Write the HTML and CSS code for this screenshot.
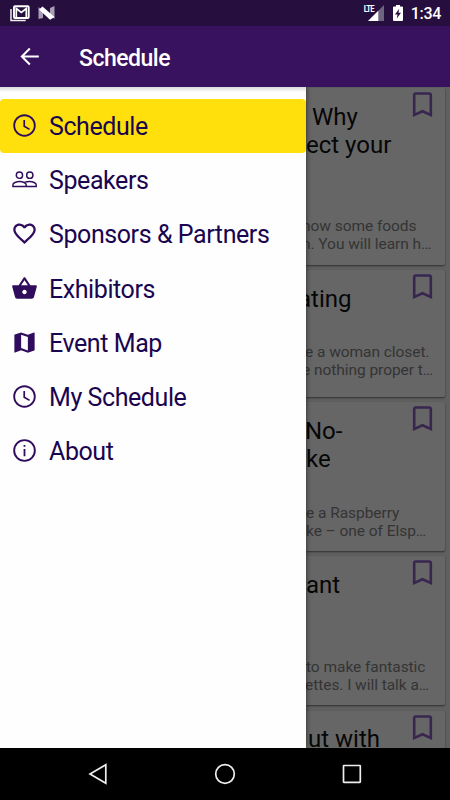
FILE: index.html
```html
<!DOCTYPE html>
<html lang="en">

<head>
    <meta charset="UTF-8">
    <meta name="viewport" content="width=device-width, initial-scale=1.0">
    <link rel="stylesheet" href="styles.css">
    <title>Schedule</title>
</head>

<body>

    <!-- shared icons -->
    <svg class="sprite">
        <symbol id="clock" viewBox="0 0 24 24">
            <path d="M11.990 2C6.470 2 2 6.480 2 12s4.470 10 9.990 10C17.520 22 22 17.520 22 12S17.520 2 11.990 2zM12 20.300c-4.580 0-8.300-3.720-8.300-8.300S7.420 3.700 12 3.700s8.300 3.720 8.300 8.300-3.720 8.300-8.300 8.300zM12.500 7H11v6l5.100 3.100.8-1.250-4.400-2.600z"/>
        </symbol>
        <symbol id="bookmark" viewBox="0 0 24 24">
            <path d="M17 3H7c-1.100 0-2 .9-2 2v16l7-3 7 3V5c0-1.100-.9-2-2-2zm.1 15.100L12 15.900l-5.100 2.200V4.900h10.200z"/>
        </symbol>
    </svg>

    <header class="status-bar">
        <svg class="gmail" viewBox="0 0 20 17">
            <path d="M1 4v11.500h14.700" fill="none" stroke="#eee" stroke-width="1.500"/>
            <rect x="4" y="1.200" width="14.700" height="11.800" rx="1" fill="none" stroke="#fff" stroke-width="1.900"/>
            <path d="M6.300 12V3.500l5 4 5-4V12" fill="none" stroke="#fff" stroke-width="1.700"/>
        </svg>
        <svg class="nougat" viewBox="0 0 17 14">
            <path d="M.5 1L5 5v7L.5 13zM16.500 0v13L12 9V2z" fill="#a79db5"/>
            <path d="M4.500.5L16.500 11l-4.500 2.700L1 3.500z" fill="#fff"/>
        </svg>
        <div class="status-right">
            <span class="lte">LTE</span>
            <svg class="signal" viewBox="0 0 16 16">
                <path d="M16 0v16H0z" fill="#6f6480"/>
                <path d="M10.300 5.700V16H0z" fill="#fff"/>
            </svg>
            <svg class="battery" viewBox="0 0 10 16">
                <path d="M3 0h4v1.500h2q1 0 1 1V15q0 1-1 1H1q-1 0-1-1V2.500q0-1 1-1h2z" fill="#fff"/>
                <path d="M6.200 3.800L2 9.500h2.500l-.7 4L8 7.700H5.500z" fill="#260e3f"/>
            </svg>
            <span class="time">1:34</span>
        </div>
    </header>

    <div class="toolbar">
        <svg class="back" viewBox="0 0 24 24">
            <path d="M20.300 12H5.200M12.300 4.900L5.200 12l7.100 7.100" fill="none" stroke="#fff" stroke-width="1.800"/>
        </svg>
        <h1>Schedule</h1>
    </div>

    <main class="content">

        <nav class="drawer">
            <a class="item active">
                <svg><use href="#clock"/></svg>
                <span>Schedule</span>
            </a>
            <a class="item">
                <svg viewBox="0 0 24 24">
                    <g fill="none" stroke="currentColor" stroke-width="1.300">
                        <circle cx="7.500" cy="8.200" r="2.800"/>
                        <circle cx="16.700" cy="8.200" r="2.800"/>
                        <path d="M1.700 18.300v-1.600c0-1.600 3-2.900 5.900-2.900s5.900 1.300 5.900 2.900v1.600zM12 14.600c1.200-.5 2.900-.8 4.500-.8 2.900 0 5.900 1.300 5.900 2.900v1.600H12"/>
                    </g>
                </svg>
                <span>Speakers</span>
            </a>
            <a class="item">
                <svg viewBox="0 0 24 24">
                    <path d="M16.500 3c-1.740 0-3.410.81-4.500 2.090C10.910 3.810 9.240 3 7.500 3 4.420 3 2 5.420 2 8.500c0 3.780 3.400 6.860 8.550 11.540L12 21.350l1.450-1.320C18.600 15.360 22 12.280 22 8.500 22 5.420 19.580 3 16.500 3zm-4.400 15.550l-.1.100-.1-.1C7.140 14.240 4 11.390 4 8.500 4 6.500 5.500 5 7.500 5c1.540 0 3.040.99 3.570 2.360h1.870C13.460 5.990 14.960 5 16.500 5c2 0 3.500 1.500 3.500 3.500 0 2.890-3.140 5.740-7.900 10.050z"/>
                </svg>
                <span>Sponsors &amp; Partners</span>
            </a>
            <a class="item">
                <svg viewBox="0 0 24 24">
                    <path d="M17.210 9l-4.380-6.560c-.19-.28-.51-.42-.83-.42-.32 0-.64.14-.83.430L6.790 9H2c-.55 0-1 .45-1 1 0 .09.010.18.040.27l2.540 9.270c.23.84 1 1.460 1.920 1.460h13c.92 0 1.690-.62 1.930-1.460l2.540-9.270L23 10c0-.55-.45-1-1-1h-4.790zM9 9l3-4.400L15 9H9zm3 8c-1.100 0-2-.9-2-2s.9-2 2-2 2 .9 2 2-.9 2-2 2z"/>
                </svg>
                <span>Exhibitors</span>
            </a>
            <a class="item">
                <svg viewBox="0 0 24 24">
                    <path d="M20.500 3l-.16.030L15 5.100 9 3 3.360 4.900c-.21.070-.36.250-.36.480V20.500c0 .28.220.5.500.5l.16-.03L9 18.900l6 2.100 5.640-1.900c.21-.07.36-.25.36-.48V3.500c0-.28-.22-.5-.5-.5zM15 19l-6-2.110V5l6 2.110V19z"/>
                </svg>
                <span>Event Map</span>
            </a>
            <a class="item">
                <svg><use href="#clock"/></svg>
                <span>My Schedule</span>
            </a>
            <a class="item">
                <svg viewBox="0 0 24 24">
                    <circle cx="12" cy="12" r="9.200" fill="none" stroke="currentColor" stroke-width="1.700"/>
                    <path d="M11.200 7h1.600v1.700h-1.600zM11.200 10.700h1.600V17h-1.600z"/>
                </svg>
                <span>About</span>
            </a>
        </nav>

        <section class="sessions">
            <article class="card tall">
                <svg class="bookmark"><use href="#bookmark"/></svg>
                <h2><span class="line indent">Why</span><span class="line">ect your</span></h2>
                <p><span class="line cut">now some foods</span><span class="line cut">n. You will learn h…</span></p>
            </article>
            <article class="card short">
                <svg class="bookmark"><use href="#bookmark"/></svg>
                <h2><span class="line cut-title">ating</span></h2>
                <p><span class="line out">e a woman closet.</span><span class="line cut">e nothing proper t…</span></p>
            </article>
            <article class="card">
                <svg class="bookmark"><use href="#bookmark"/></svg>
                <h2><span class="line out">No-</span><span class="line">ke</span></h2>
                <p><span class="line">e a Raspberry</span><span class="line">ke – one of Elsp…</span></p>
            </article>
            <article class="card">
                <svg class="bookmark"><use href="#bookmark"/></svg>
                <h2><span class="line">ant</span></h2>
                <p><span class="line">to make fantastic</span><span class="line out">ettes. I will talk a…</span></p>
            </article>
            <article class="card">
                <svg class="bookmark"><use href="#bookmark"/></svg>
                <h2><span class="line last">ut with</span></h2>
            </article>
        </section>

    </main>

    <footer class="nav-bar">
        <svg viewBox="0 0 24 24"><path d="M19.800 2.700v18.600L4 12z"/></svg>
        <svg viewBox="0 0 24 24"><circle cx="12" cy="12" r="9.300"/></svg>
        <svg viewBox="0 0 24 24"><rect x="3.500" y="3.500" width="16.800" height="16.800" rx=".5"/></svg>
    </footer>

</body>

</html>
```
FILE: styles.css
```css
*{
    padding: 0;
    margin: 0;
    box-sizing: border-box;
}
body{
    width: 450px;
    height: 800px;
    overflow: hidden;
    display: flex;
    flex-direction: column;
    font-family: Roboto, "Liberation Sans", sans-serif;
    background: #000;
}
svg{
    display: block;
    flex: none;
}
.sprite{
    display: none;
}

/* status bar */
.status-bar{
    height: 26px;
    flex: none;
    display: flex;
    align-items: center;
    padding: 0 9px 0 10px;
    background: #260e3f;
    color: #fff;
}
.gmail{
    width: 20px;
    height: 17px;
}
.nougat{
    width: 17px;
    height: 14px;
    margin-left: 8px;
}
.status-right{
    display: flex;
    margin-left: auto;
    align-items: center;
}
.lte{
    font-size: 9px;
    font-weight: 700;
    line-height: 9px;
    letter-spacing: -.9px;
    margin: 0 -6px 8px 0;
    transform: scaleX(.85);
    transform-origin: right;
    z-index: 1;
}
.signal{
    width: 16px;
    height: 16px;
}
.battery{
    width: 10px;
    height: 16px;
    margin: 0 8px 0 9px;
}
.time{
    font-size: 16px;
    font-weight: 500;
    line-height: 26px;
    letter-spacing: -.3px;
    padding-top: 2px;
}

/* toolbar */
.toolbar{
    height: 61px;
    flex: none;
    display: flex;
    align-items: center;
    padding-left: 16px;
    background: #38125e;
    color: #fff;
}
.back{
    width: 27px;
    height: 27px;
}
.toolbar h1{
    font-size: 23px;
    font-weight: 500;
    letter-spacing: -.5px;
    margin-left: 36px;
    padding-top: 3px;
}

.content{
    height: 661px;
    flex: none;
    display: flex;
    overflow: hidden;
}

/* drawer */
.drawer{
    width: 306px;
    flex: none;
    padding-top: 11.500px;
    background: linear-gradient(#d8d8d8, #fefefe 5px);
    box-shadow: 0 0 5px rgba(0, 0, 0, .6);
    z-index: 1;
}
.item{
    display: flex;
    align-items: center;
    height: 54.200px;
    padding-left: 11px;
    font-size: 25px;
    letter-spacing: -.42px;
    color: #1a0550;
    border-radius: 4px;
}
.item svg{
    width: 27px;
    height: 27px;
    fill: currentColor;
    color: #2f0d5c;
}
.item span{
    margin-left: 11px;
    padding-top: 2px;
}
.active{
    background: #ffe00d;
}

/* session list behind the drawer */
.sessions{
    flex: 1;
    padding: 1px 5px 0 0;
    background: #606060;
}
.card{
    display: flex;
    flex-direction: column;
    position: relative;
    height: 149px;
    margin-bottom: 5.300px;
    padding: 14.500px 0 11px;
    background: #666;
    border-radius: 0 2px 2px 0;
    box-shadow: 0 1px 2px rgba(0, 0, 0, .5);
}
.tall{
    height: 177px;
    padding-bottom: 12px;
}
.short{
    height: 126.500px;
    padding-bottom: 17.500px;
}
.bookmark{
    position: absolute;
    top: 0;
    right: 6px;
    width: 33px;
    height: 33px;
    fill: #392650;
}
.card h2{
    font-size: 24px;
    font-weight: 400;
    line-height: 28.200px;
    color: #060606;
}
.card p{
    margin-top: auto;
    font-size: 15.500px;
    line-height: 18px;
    letter-spacing: -.05px;
    color: #343434;
}
.line{
    display: block;
    white-space: nowrap;
}
.indent{
    margin-left: 6px;
}
.last{
    margin-left: 2px;
}
.out{
    margin-left: -1px;
}
.cut{
    margin-left: -4px;
}
.cut-title{
    margin-left: -8px;
}

/* system navigation */
.nav-bar{
    flex: 1;
    display: flex;
    align-items: center;
    justify-content: center;
    gap: 103px;
    background: #000;
}
.nav-bar svg{
    width: 24px;
    height: 24px;
    fill: none;
    stroke: #eee;
    stroke-width: 1.700;
}
```
